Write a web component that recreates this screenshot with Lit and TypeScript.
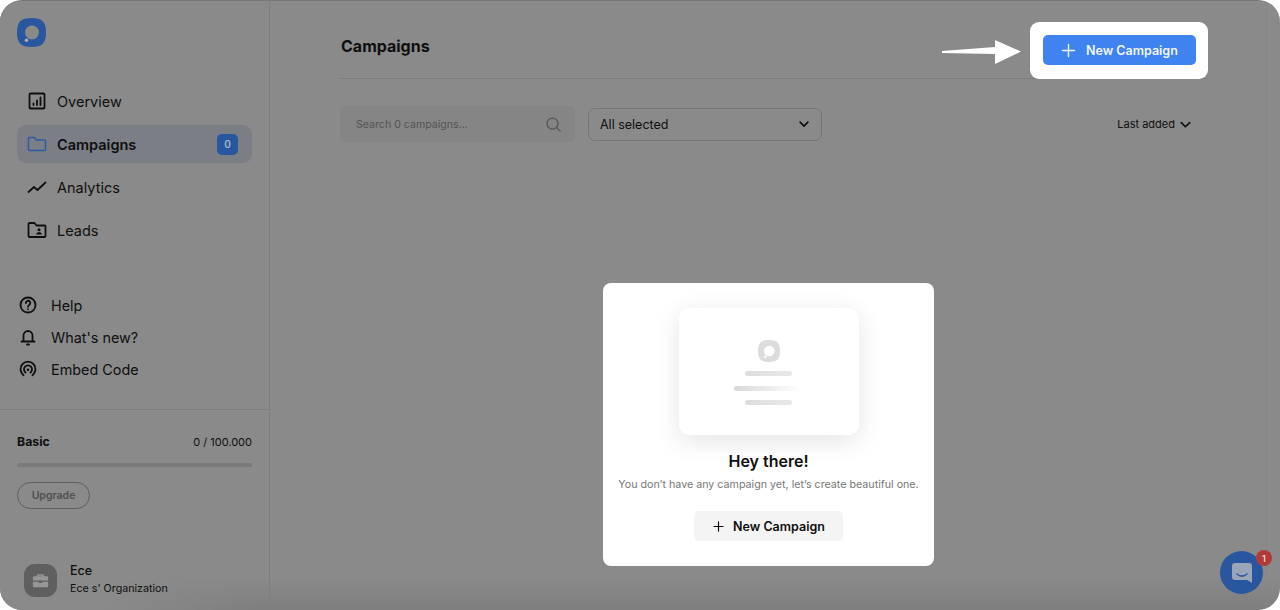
import { LitElement, css, html, svg } from "lit";
import { customElement } from "lit/decorators.js";

const stroke = (body: unknown, size = 20, weight = 1.8) => html`<svg
  width=${size}
  height=${size}
  viewBox="0 0 20 20"
  fill="none"
  stroke="currentColor"
  stroke-width=${weight}
  stroke-linecap="round"
  stroke-linejoin="round"
>
  ${body}
</svg>`;

const icons = {
  overview: svg`<rect x="2.500" y="2.500" width="15" height="15" rx="1" /><path d="M6.500 14v-1.500M10 14V9.500M13.500 14V6.500" />`,
  folder: svg`<path d="M1.500 4.500a1 1 0 0 1 1-1h5l2 2.500h8a1 1 0 0 1 1 1v8.500a1 1 0 0 1-1 1h-15a1 1 0 0 1-1-1z" />`,
  analytics: svg`<path d="M1.500 15l5.500-5 3.500 3L18.500 5.500" />`,
  leads: svg`<path d="M1.500 4a1 1 0 0 1 1-1h5l2 2.500h8a1 1 0 0 1 1 1V16a1 1 0 0 1-1 1h-15a1 1 0 0 1-1-1z" /><circle cx="12" cy="9.800" r="1.500" fill="currentColor" stroke="none" /><path d="M9.300 14.500h5.400v-.6c0-1-1.200-1.700-2.700-1.700s-2.700.7-2.700 1.700z" fill="currentColor" stroke="none" />`,
  help: svg`<circle cx="10" cy="10" r="7.500" /><path d="M7.900 8a2.200 2.200 0 1 1 3.300 1.900c-.8.500-1.200 1-1.200 1.800" /><path d="M10 14.200v.1" />`,
  bell: svg`<path d="M5.500 14.500V8.500a4.500 4.500 0 0 1 9 0v6M3.500 14.500h13M9 17.500h2" />`,
  embed: svg`<path d="M5.500 16.200A7.500 7.500 0 1 1 14.500 16.200" /><path d="M7.500 13.500A4 4 0 1 1 12.500 13.500" /><circle cx="10" cy="10.800" r="1.300" fill="currentColor" stroke="none" />`,
  search: svg`<circle cx="9" cy="9" r="5.800" /><path d="M13.300 13.300L17 17" />`,
  chevron: svg`<path d="M3.500 7l6.500 6.500L16.500 7" />`,
  plus: svg`<path d="M10 3v14M3 10h14" />`,
};

const logo = (outer: string, inner: string, dot: string, size: number) => html`<svg
  width=${size}
  height=${size}
  viewBox="0 0 30 30"
>
  <path
    d="M15 0C26 0 30 4 30 15S26 30 15 30 0 26 0 15 4 0 15 0z"
    fill=${outer}
  />
  <circle cx="15.500" cy="15" r="7.200" fill=${inner} />
  <circle cx="9.800" cy="23" r="1.800" fill=${dot} />
</svg>`;

@customElement("app-root")
export class AppRoot extends LitElement {
  static styles = css`
    :host {
      display: block;
      width: 1280px;
      height: 610px;
      background: #fff;
      font-family: Inter, "Liberation Sans", sans-serif;
      color: #0f0f0f;
    }
    * {
      box-sizing: border-box;
    }
    .window {
      position: relative;
      display: flex;
      height: 610px;
      padding-right: 13px;
      overflow: hidden;
      background: linear-gradient(to right, #8a8a8a 100px, transparent 260px),
        linear-gradient(#8a8a8a 575px, #7e7e7e 610px);
      border-radius: 22px;
      border-top: 1px solid #787878;
    }
    svg {
      display: block;
      flex: none;
    }

    .sidebar {
      display: flex;
      flex-direction: column;
      flex: none;
      width: 270px;
      border-right: 1px solid #7e7e7e;
    }
    .logo {
      padding: 17px 0 0 17px;
      height: 70px;
    }
    .nav {
      display: flex;
      flex-direction: column;
      gap: 5px;
      padding: 11px 17px 0;
    }
    .nav-item {
      display: flex;
      align-items: center;
      gap: 10px;
      height: 38px;
      padding: 0 14px 0 10px;
      border-radius: 9px;
      font-size: 14.500px;
    }
    .nav-item.active {
      background: #7b7f85;
      font-weight: 600;
    }
    .nav-item.active svg {
      color: #2d5ca6;
    }
    .count {
      display: flex;
      align-items: center;
      justify-content: center;
      width: 21px;
      height: 21px;
      margin-left: auto;
      border-radius: 5px;
      background: #28579f;
      color: #a9b6c9;
      font-size: 10px;
      font-weight: 600;
    }
    .links {
      display: flex;
      flex-direction: column;
      gap: 8px;
      margin-top: 44px;
      padding: 0 18px;
    }
    .link {
      display: flex;
      align-items: center;
      gap: 13px;
      height: 24px;
      font-size: 14.400px;
    }
    .plan {
      margin-top: 28px;
      padding: 23px 17px 0;
      border-top: 1px solid #7e7e7e;
    }
    .plan-row {
      display: flex;
      justify-content: space-between;
      align-items: center;
      height: 17px;
      font-size: 11px;
    }
    .plan-row b {
      font-size: 12.300px;
      font-weight: 700;
    }
    .progress {
      height: 4px;
      margin-top: 13px;
      border-radius: 2px;
      background: #7a7a7a;
    }
    .upgrade {
      display: inline-flex;
      align-items: center;
      justify-content: center;
      width: 73px;
      height: 27px;
      margin-top: 15px;
      border: 1px solid #5e5e5e;
      border-radius: 14px;
      color: #505050;
      font-size: 10.500px;
      font-weight: 600;
    }
    .org {
      display: flex;
      align-items: center;
      gap: 13px;
      margin-top: auto;
      padding: 0 0 12px 24px;
    }
    .avatar {
      display: flex;
      align-items: center;
      justify-content: center;
      width: 33px;
      height: 33px;
      border-radius: 11px;
      background: #5f5f5f;
      color: #969696;
    }
    .org-name {
      font-size: 12.500px;
      font-weight: 500;
      line-height: 18px;
    }
    .org-sub {
      font-size: 10.700px;
      line-height: 18px;
    }

    .main {
      flex: 1;
      padding: 0 58px 0 70px;
      border-right: 1px solid #858585;
    }
    .header {
      display: flex;
      align-items: center;
      justify-content: space-between;
      height: 78px;
      padding-top: 21px;
      border-bottom: 1px solid #7e7e7e;
    }
    .title {
      padding: 0 0 8px 1px;
      font-size: 16px;
      font-weight: 700;
    }
    .spot {
      padding: 13px 12px 14px 13px;
      margin-bottom: -1px;
      border-radius: 9px;
      background: #fff;
    }
    .primary {
      display: flex;
      align-items: center;
      gap: 9px;
      width: 153px;
      height: 30px;
      padding-left: 17px;
      border-radius: 5px;
      background: #3f83f0;
      color: #f2f6fd;
      font-size: 12.500px;
      font-weight: 600;
    }
    .pointer {
      position: absolute;
      left: 941px;
      top: 38px;
    }
    .filters {
      display: flex;
      align-items: center;
      gap: 13px;
      margin-top: 27px;
    }
    .search {
      display: flex;
      align-items: center;
      justify-content: space-between;
      width: 235px;
      height: 36px;
      padding: 0 12px 0 16px;
      border-radius: 5px;
      background: #858585;
      color: #555;
      font-size: 10.600px;
    }
    .select {
      display: flex;
      align-items: center;
      justify-content: space-between;
      width: 234px;
      height: 33px;
      padding: 0 11px;
      border: 1px solid #757575;
      border-radius: 7px;
      font-size: 12.500px;
    }
    .sort {
      display: flex;
      align-items: center;
      gap: 4px;
      margin-left: auto;
      margin-right: 16px;
      font-size: 11px;
    }

    .modal {
      position: absolute;
      left: 603px;
      top: 282px;
      display: flex;
      flex-direction: column;
      align-items: center;
      width: 331px;
      height: 283px;
      padding-top: 25px;
      border-radius: 8px;
      background: #fff;
    }
    .art {
      display: flex;
      flex-direction: column;
      align-items: center;
      width: 180px;
      height: 127px;
      padding-top: 32px;
      border-radius: 10px;
      background: #fff;
      box-shadow: 0 6px 26px rgba(0, 0, 0, 0.11);
    }
    .line {
      height: 5px;
      margin-top: 9px;
      border-radius: 3px;
      background: linear-gradient(90deg, #dcdcdc, #e8e8e8);
    }
    .line.short {
      width: 47px;
    }
    .line.wide {
      width: 67px;
      margin: 10px 3px 0 0;
      background: linear-gradient(90deg, #d8d8d8, #ffffff);
    }
    .modal h2 {
      margin: 16px 0 0;
      font-size: 16px;
      font-weight: 600;
      line-height: 20px;
    }
    .modal p {
      margin: 6px 0 0;
      color: #777;
      font-size: 10.700px;
      line-height: 15px;
    }
    .secondary {
      display: flex;
      align-items: center;
      justify-content: center;
      gap: 8px;
      width: 149px;
      height: 30px;
      margin-top: 19px;
      border-radius: 5px;
      background: #f4f4f4;
      font-size: 12.500px;
      font-weight: 600;
    }

    .chat {
      position: absolute;
      left: 1220px;
      top: 550px;
      display: flex;
      align-items: center;
      justify-content: center;
      width: 43px;
      height: 43px;
      border-radius: 50%;
      background: #28579f;
      color: #9aa6b8;
    }
    .badge {
      position: absolute;
      right: -9px;
      top: -1px;
      display: flex;
      align-items: center;
      justify-content: center;
      width: 16px;
      height: 16px;
      border-radius: 50%;
      background: #b23a36;
      color: #e9d6d5;
      font-size: 9px;
      font-weight: 600;
    }
  `;

  render() {
    return html`
      <div class="window">
        <aside class="sidebar">
          <div class="logo">${logo("#28579f", "#8a8a8a", "#b0b0b0", 29)}</div>
          <nav class="nav">
            <div class="nav-item">${stroke(icons.overview)}Overview</div>
            <div class="nav-item active">
              ${stroke(icons.folder, 20, 1.5)}Campaigns<span class="count">0</span>
            </div>
            <div class="nav-item">${stroke(icons.analytics)}Analytics</div>
            <div class="nav-item">${stroke(icons.leads)}Leads</div>
          </nav>
          <div class="links">
            <div class="link">${stroke(icons.help)}Help</div>
            <div class="link">${stroke(icons.bell)}What's new?</div>
            <div class="link">${stroke(icons.embed)}Embed Code</div>
          </div>
          <div class="plan">
            <div class="plan-row"><b>Basic</b><span>0 / 100.000</span></div>
            <div class="progress"></div>
            <div class="upgrade">Upgrade</div>
          </div>
          <div class="org">
            <div class="avatar">
              <svg width="17" height="17" viewBox="0 0 20 20" fill="currentColor">
                <path
                  d="M7 2.500h6a1 1 0 0 1 1 1V5h3.500A1.500 1.500 0 0 1 19 6.500V10H1V6.500A1.500 1.500 0 0 1 2.500 5H6V3.500a1 1 0 0 1 1-1zM8 4.500V5h4v-.5z"
                />
                <path d="M1 11.500h7V13h4v-1.500h7v5A1.500 1.500 0 0 1 17.500 18h-15A1.500 1.500 0 0 1 1 16.500z" />
              </svg>
            </div>
            <div>
              <div class="org-name">Ece</div>
              <div class="org-sub">Ece s' Organization</div>
            </div>
          </div>
        </aside>

        <main class="main">
          <header class="header">
            <div class="title">Campaigns</div>
            <div class="spot">
              <div class="primary">${stroke(icons.plus, 17, 1.7)}New Campaign</div>
            </div>
          </header>
          <div class="filters">
            <div class="search">
              Search 0 campaigns...${stroke(icons.search, 19, 1.4)}
            </div>
            <div class="select">All selected${stroke(icons.chevron, 12, 2.8)}</div>
            <div class="sort">Last added${stroke(icons.chevron, 13, 2.6)}</div>
          </div>
        </main>

        <svg class="pointer" width="82" height="26" viewBox="0 0 82 26" fill="#fff">
          <path d="M1 12L54 8 54 1 80 12.500 54 25 54 15 1 14z" />
        </svg>

        <section class="modal">
          <div class="art">
            ${logo("#dcdcdc", "#fff", "#fff", 22)}
            <div class="line short"></div>
            <div class="line wide"></div>
            <div class="line short"></div>
          </div>
          <h2>Hey there!</h2>
          <p>You don’t have any campaign yet, let’s create beautiful one.</p>
          <div class="secondary">${stroke(icons.plus, 13, 1.8)}New Campaign</div>
        </section>

        <div class="chat">
          <svg width="24" height="24" viewBox="0 0 24 24" fill="currentColor">
            <path
              d="M5 2h14a3 3 0 0 1 3 3v17l-5-3H5a3 3 0 0 1-3-3V5a3 3 0 0 1 3-3z"
            />
            <path
              d="M7 13c3 2.500 7 2.500 10 0"
              fill="none"
              stroke="#28579f"
              stroke-width="1.600"
              stroke-linecap="round"
            />
          </svg>
          <span class="badge">1</span>
        </div>
      </div>
    `;
  }
}
